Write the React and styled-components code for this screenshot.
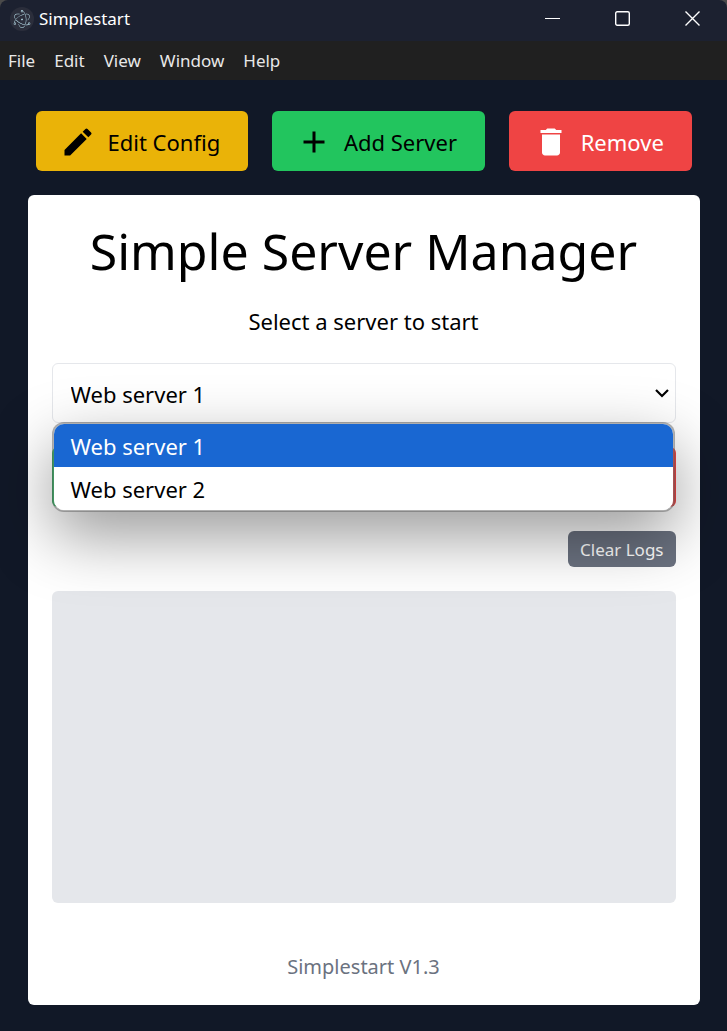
import React, { useState } from "react";
import styled, { createGlobalStyle } from "styled-components";
import { MdAdd, MdDelete, MdEdit } from "react-icons/md";
import { SiElectron } from "react-icons/si";

const GlobalStyle = createGlobalStyle`
  *, *::before, *::after { box-sizing: border-box; }
  body {
    margin: 0;
    background: #111827;
    color: #000;
    font-family: "Noto Sans", "Open Sans", sans-serif;
    font-size: 22px;
    line-height: 36px;
  }
  button, select { font: inherit; color: inherit; margin: 0; border: 0; }
`;

const Window = styled.div`
  min-height: 100vh;
  display: flex;
  flex-direction: column;
`;

const Backdrop = styled.div`
  background: #4a4a4a;
`;

const TitleBar = styled.header`
  display: flex;
  align-items: center;
  height: 41px;
  padding-left: 10px;
  padding-bottom: 4px;
  background: #1c2130;
  border-radius: 8px 8px 0 0;
  color: #fff;
`;

const AppBadge = styled.span`
  display: flex;
  align-items: center;
  justify-content: center;
  width: 24px;
  height: 24px;
  margin-right: 5px;
  border-radius: 50%;
  background: #2b2e3b;
  color: #c4ecf8;
`;

const WindowTitle = styled.span`
  flex: 1;
  font-size: 17px;
  line-height: 24px;
`;

const WindowButton = styled.button`
  display: flex;
  align-items: center;
  justify-content: center;
  width: 70px;
  height: 37px;
  padding: 0;
  background: transparent;
`;

const MenuBar = styled.nav`
  display: flex;
  align-items: center;
  gap: 19px;
  height: 39px;
  padding: 0 8px;
  background: #202020;
`;

const MenuItem = styled.button`
  padding: 0;
  background: transparent;
  color: #e8e8e8;
  font-size: 17px;
  line-height: 24px;
`;

const Content = styled.main`
  flex: 1;
  display: flex;
  flex-direction: column;
  gap: 24px;
  width: 100%;
  max-width: 672px;
  margin: 0 auto;
  padding: 31px 0 26px;
`;

const Toolbar = styled.div`
  display: flex;
  justify-content: center;
  gap: 24px;
  padding: 0 8px;
`;

const tones = {
  edit: ["#eab308", "#000"],
  add: ["#22c55e", "#000"],
  remove: ["#ef4444", "#fff"],
};

const ActionButton = styled.button`
  flex: 1 0 auto;
  display: flex;
  align-items: center;
  gap: 12px;
  height: 60px;
  padding: 1px 24px 0;
  border-radius: 6px;
  background: ${({ $tone }) => tones[$tone][0]};
  color: ${({ $tone }) => tones[$tone][1]};
  white-space: nowrap;
`;

const Card = styled.section`
  flex: 1;
  display: flex;
  flex-direction: column;
  padding: 24px;
  border-radius: 6px;
  background: #fff;
`;

const Title = styled.h1`
  margin: 0 0 20px;
  font-size: 50px;
  font-weight: 400;
  line-height: 64px;
  text-align: center;
`;

const Prompt = styled.label`
  margin-bottom: 24px;
  text-align: center;
`;

const Picker = styled.div`
  position: relative;
  margin-bottom: 24px;
`;

const Select = styled.select`
  display: block;
  width: 100%;
  height: 60px;
  padding: 2px 18px 0;
  border: 1px solid #e5e7eb;
  border-radius: 6px;
  background: #fff;
  appearance: none;
`;

const Chevron = styled.svg`
  position: absolute;
  top: 24px;
  right: 6px;
  pointer-events: none;
`;

const Options = styled.ul`
  position: absolute;
  z-index: 1;
  top: 59px;
  left: 0;
  right: 1px;
  margin: 0;
  padding: 0;
  list-style: none;
  border: 2px solid rgba(96, 96, 96, 0.5);
  border-radius: 12px;
  background: #fff;
  background-clip: padding-box;
  box-shadow: 0 24px 64px rgba(0, 0, 0, 0.4);
  overflow: hidden;
`;

const Option = styled.li`
  height: 43px;
  padding: 4px 17px 3px;
  background: ${({ $active }) => ($active ? "#1967d2" : "#fff")};
  color: ${({ $active }) => ($active ? "#fff" : "#000")};
`;

const RunControls = styled.div`
  display: flex;
  gap: 24px;
  margin-bottom: 24px;
`;

const RunButton = styled.button`
  flex: 1;
  height: 60px;
  border-radius: 6px;
  background: ${({ $stop }) => ($stop ? "#ef4444" : "#22c55e")};
`;

const ClearButton = styled.button`
  align-self: flex-end;
  height: 36px;
  margin-bottom: 24px;
  padding: 1px 12px 0;
  border-radius: 6px;
  background: #6b7280;
  color: #fff;
  font-size: 17px;
  line-height: 24px;
`;

const LogPanel = styled.div`
  flex: 1;
  min-height: 240px;
  border-radius: 6px;
  background: #e5e7eb;
`;

const Version = styled.footer`
  padding-top: 50px;
  color: #6b7280;
  font-size: 20px;
  line-height: 28px;
  text-align: center;
`;

const servers = ["Web server 1", "Web server 2"];
const menus = ["File", "Edit", "View", "Window", "Help"];

export default function App() {
  const [server, setServer] = useState(servers[0]);

  return (
    <Window>
      <GlobalStyle />
      <Backdrop>
        <TitleBar>
          <AppBadge>
            <SiElectron size={18} />
          </AppBadge>
          <WindowTitle>Simplestart</WindowTitle>
          <WindowButton aria-label="Minimize">
            <svg width="15" height="15" fill="none" stroke="currentColor">
              <path d="M0 7.500H15" />
            </svg>
          </WindowButton>
          <WindowButton aria-label="Maximize">
            <svg width="15" height="15" fill="none" stroke="currentColor" strokeWidth="1.400">
              <rect x="0.700" y="0.700" width="13.600" height="13.600" rx="1.500" />
            </svg>
          </WindowButton>
          <WindowButton aria-label="Close">
            <svg width="15" height="15" fill="none" stroke="currentColor" strokeWidth="1.400">
              <path d="M0.500 0.500L14.500 14.500M14.500 0.500L0.500 14.500" />
            </svg>
          </WindowButton>
        </TitleBar>
      </Backdrop>
      <MenuBar aria-label="Application menu">
        {menus.map((name) => (
          <MenuItem key={name}>{name}</MenuItem>
        ))}
      </MenuBar>
      <Content>
        <Toolbar>
          <ActionButton $tone="edit">
            <MdEdit size={36} />
            Edit Config
          </ActionButton>
          <ActionButton $tone="add">
            <MdAdd size={36} />
            Add Server
          </ActionButton>
          <ActionButton $tone="remove">
            <MdDelete size={36} />
            Remove
          </ActionButton>
        </Toolbar>
        <Card>
          <Title>Simple Server Manager</Title>
          <Prompt htmlFor="server">Select a server to start</Prompt>
          <Picker>
            <Select id="server" value={server} onChange={(e) => setServer(e.target.value)}>
              {servers.map((name) => (
                <option key={name}>{name}</option>
              ))}
            </Select>
            <Chevron width="16" height="12" fill="none" stroke="#000" strokeWidth="2.200">
              <path d="M2 3L8 9L14 3" />
            </Chevron>
            <Options role="listbox" aria-label="Servers">
              {servers.map((name) => (
                <Option
                  key={name}
                  role="option"
                  aria-selected={name === server}
                  $active={name === server}
                  onClick={() => setServer(name)}
                >
                  {name}
                </Option>
              ))}
            </Options>
          </Picker>
          <RunControls>
            <RunButton aria-label="Start" />
            <RunButton $stop aria-label="Stop" />
          </RunControls>
          <ClearButton>Clear Logs</ClearButton>
          <LogPanel role="log" />
          <Version>Simplestart V1.3</Version>
        </Card>
      </Content>
    </Window>
  );
}
